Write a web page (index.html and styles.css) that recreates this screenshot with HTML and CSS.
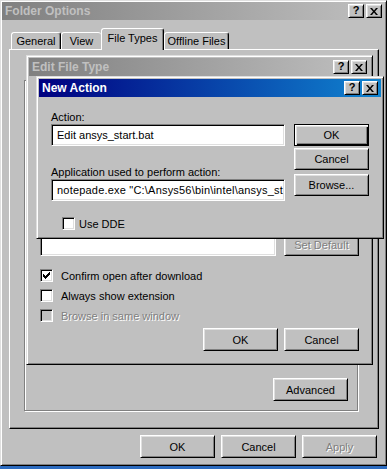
FILE: index.html
```html
<!DOCTYPE html>
<html>
<head>
<meta charset="utf-8">
<link rel="stylesheet" href="styles.css">
</head>
<body>
<div class="win folder">
  <div class="titlebar inactive">
    <span class="title">Folder Options</span>
    <div class="tbtns">
      <span class="tbtn help">?</span>
      <span class="tbtn"><svg width="8" height="7" viewBox="0 0 8 7"><path d="M0 0h2l2 2.4 2-2.4h2l-3 3.5 3 3.5h-2l-2-2.4-2 2.4h-2l3-3.5z" fill="#000"/></svg></span>
    </div>
  </div>
  <div class="tabs">
    <div class="tab t-general">General</div>
    <div class="tab t-view">View</div>
    <div class="tab sel t-ft">File Types</div>
    <div class="tab t-off">Offline Files</div>
  </div>
  <div class="panel">
    <div class="group">
      <button class="btn">Advanced</button>
    </div>
  </div>
  <div class="footer">
    <button class="btn">OK</button>
    <button class="btn">Cancel</button>
    <button class="btn dis">Apply</button>
  </div>

  <div class="win dialog edit">
    <div class="titlebar inactive">
      <span class="title">Edit File Type</span>
      <div class="tbtns">
        <span class="tbtn help">?</span>
        <span class="tbtn"><svg width="8" height="7" viewBox="0 0 8 7"><path d="M0 0h2l2 2.4 2-2.4h2l-3 3.5 3 3.5h-2l-2-2.4-2 2.4h-2l3-3.5z" fill="#000"/></svg></span>
      </div>
    </div>
    <div class="edit-body">
      <div class="edit-top"></div>
      <div class="actions-row">
        <div class="field listbox"></div>
        <div class="action-btns">
          <button class="btn dis">Set Default</button>
        </div>
      </div>
      <div class="checks">
        <div class="check"><span class="cb"><svg width="7" height="7" viewBox="0 0 7 7" shape-rendering="crispEdges"><path d="M0 2h1v3h-1z M1 3h1v3h-1z M2 4h1v3h-1z M3 3h1v3h-1z M4 2h1v3h-1z M5 1h1v3h-1z M6 0h1v3h-1z" fill="#000"/></svg></span><span>Confirm open after download</span></div>
        <div class="check"><span class="cb"></span><span>Always show extension</span></div>
        <div class="check dis"><span class="cb"></span><span>Browse in same window</span></div>
      </div>
      <div class="edit-footer">
        <button class="btn">OK</button>
        <button class="btn">Cancel</button>
      </div>
    </div>
  </div>

  <div class="win dialog newact">
    <div class="titlebar active">
      <span class="title">New Action</span>
      <div class="tbtns">
        <span class="tbtn help">?</span>
        <span class="tbtn"><svg width="8" height="7" viewBox="0 0 8 7"><path d="M0 0h2l2 2.4 2-2.4h2l-3 3.5 3 3.5h-2l-2-2.4-2 2.4h-2l3-3.5z" fill="#000"/></svg></span>
      </div>
    </div>
    <div class="na-body">
      <div class="na-left">
        <span class="label">Action:</span>
        <div class="field">Edit ansys_start.bat</div>
        <span class="label app-label">Application used to perform action:</span>
        <div class="field app-field">notepade.exe "C:\Ansys56\bin\intel\ansys_st</div>
        <div class="check dde"><span class="cb"></span><span>Use DDE</span></div>
      </div>
      <div class="na-right">
        <button class="btn def">OK</button>
        <button class="btn b-cancel">Cancel</button>
        <button class="btn b-browse">Browse...</button>
      </div>
    </div>
  </div>
</div>
</body>
</html>
```
FILE: styles.css
```css
* { box-sizing: border-box; }
html, body { margin: 0; padding: 0; }
body {
  width: 387px;
  height: 469px;
  overflow: hidden;
  background: #2d6cc0;
  font-family: "Liberation Sans", Arial, sans-serif;
  font-size: 11px;
  color: #000;
}
.win {
  background: #c0c0c0;
  border: 1px solid;
  border-color: #dfdfdf #000 #000 #dfdfdf;
  box-shadow: inset 1px 1px #fff, inset -1px -1px #808080;
}
.folder {
  position: relative;
  width: 387px;
  height: 466px;
  padding: 1px;
  display: flex;
  flex-direction: column;
}
.dialog {
  position: absolute;
  padding: 2px;
  display: flex;
  flex-direction: column;
}
.edit { left: 25px; top: 54px; width: 347px; height: 310px; }
.newact { left: 35px; top: 75px; width: 348px; height: 163px; }

.titlebar {
  flex: none;
  height: 18px;
  display: flex;
  align-items: center;
  justify-content: space-between;
  padding: 0 3px 0 3px;
}
.titlebar.inactive { background: linear-gradient(90deg, #808080, #c0c0c0); color: #c0c0c0; }
.titlebar.active { background: linear-gradient(90deg, #000080, #1084d0); color: #fff; }
.title { font-weight: bold; font-size: 12px; white-space: nowrap; }
.tbtns { display: flex; gap: 2px; }
.tbtn {
  width: 16px;
  height: 14px;
  background: #c0c0c0;
  border: 1px solid;
  border-color: #fff #000 #000 #fff;
  box-shadow: inset 1px 1px #dfdfdf, inset -1px -1px #808080;
  display: flex;
  align-items: center;
  justify-content: center;
  color: #000;
}
.tbtn.help { font-weight: bold; font-size: 11px; line-height: 1; padding-bottom: 1px; }

.tabs {
  position: relative;
  z-index: 1;
  flex: none;
  display: flex;
  align-items: flex-end;
  height: 21px;
  margin: 8px 0 0 9px;
}
.tab {
  height: 17px;
  background: #c0c0c0;
  border: 1px solid;
  border-bottom: none;
  border-color: #fff #000 transparent #fff;
  border-radius: 3px 3px 0 0;
  box-shadow: inset -1px 0 #808080;
  display: flex;
  align-items: center;
  justify-content: center;
  white-space: nowrap;
}
.t-general { width: 50px; }
.t-view { width: 40px; border-right: none; box-shadow: none; }
.t-ft { width: 63px; }
.t-off { width: 65px; }
.tab.sel { height: 22px; margin-bottom: -1px; padding-bottom: 4px; }

.panel {
  flex: none;
  width: 370px;
  height: 380px;
  margin-left: 7px;
  border: 1px solid;
  border-color: #fff #000 #000 #fff;
  box-shadow: inset -1px -1px #808080;
  padding: 30px 0 0 14px;
}
.group {
  width: 334px;
  height: 331px;
  border: 1px solid #808080;
  box-shadow: inset 1px 1px #fff, 1px 1px #fff;
  display: flex;
  align-items: flex-end;
  justify-content: flex-end;
  padding: 0 9px 9px 0;
}
.footer {
  flex: none;
  display: flex;
  justify-content: flex-end;
  gap: 6px;
  margin: 6px 8px 0 0;
}

.btn {
  flex: none;
  width: 75px;
  height: 23px;
  margin: 0;
  padding: 0;
  background: #c0c0c0;
  border: 1px solid;
  border-color: #fff #000 #000 #fff;
  box-shadow: inset 1px 1px #dfdfdf, inset -1px -1px #808080;
  font: 11px "Liberation Sans", Arial, sans-serif;
  color: #000;
  display: flex;
  align-items: center;
  justify-content: center;
  white-space: nowrap;
}
.btn.dis { color: #808080; text-shadow: 1px 1px #fff; }
.btn.def {
  border-color: #000;
  box-shadow: inset 1px 1px #fff, inset 2px 2px #dfdfdf, inset -1px -1px #000, inset -2px -2px #808080;
}

.label { display: block; line-height: 13px; white-space: nowrap; }

.field {
  height: 22px;
  background: #fff;
  border: 1px solid;
  border-color: #808080 #fff #fff #808080;
  box-shadow: inset 1px 1px #000, inset -1px -1px #dfdfdf;
  padding: 0 4px 0 5px;
  display: flex;
  align-items: center;
  white-space: nowrap;
  overflow: hidden;
}
.app-field { letter-spacing: 0.2px; }

.check { display: flex; align-items: center; gap: 8px; height: 13px; white-space: nowrap; }
.cb {
  flex: none;
  width: 13px;
  height: 13px;
  background: #fff;
  border: 1px solid;
  border-color: #808080 #fff #fff #808080;
  box-shadow: inset 1px 1px #000, inset -1px -1px #dfdfdf;
  display: flex;
  align-items: center;
  justify-content: center;
}
.check.dis { color: #808080; text-shadow: 1px 1px #fff; }
.check.dis .cb { background: #c0c0c0; }

/* Edit File Type */
.edit-body {
  flex: 1;
  display: flex;
  flex-direction: column;
  padding: 0 11px 0 11px;
}
.edit-top { height: 76px; }
.actions-row {
  height: 104px;
  display: flex;
  justify-content: space-between;
}
.listbox { width: 236px; height: 104px; }
.action-btns { display: flex; flex-direction: column; justify-content: flex-end; }
.checks { display: flex; flex-direction: column; gap: 7px; margin-top: 13px; }
.edit-footer { display: flex; justify-content: flex-end; gap: 6px; margin-top: 6px; }

/* New Action */
.na-body {
  flex: 1;
  display: flex;
  gap: 9px;
  padding: 0 12px 0 12px;
}
.na-left { width: 234px; display: flex; flex-direction: column; padding-top: 14px; }
.na-left .app-label { margin-top: 20px; }
.na-right { width: 75px; display: flex; flex-direction: column; padding-top: 27px; }
.na-right .btn { height: 22px; }
.b-cancel { margin-top: 2px; }
.b-browse { margin-top: 4px; }
.dde { margin: 16px 0 0 11px; gap: 4px; }
```
